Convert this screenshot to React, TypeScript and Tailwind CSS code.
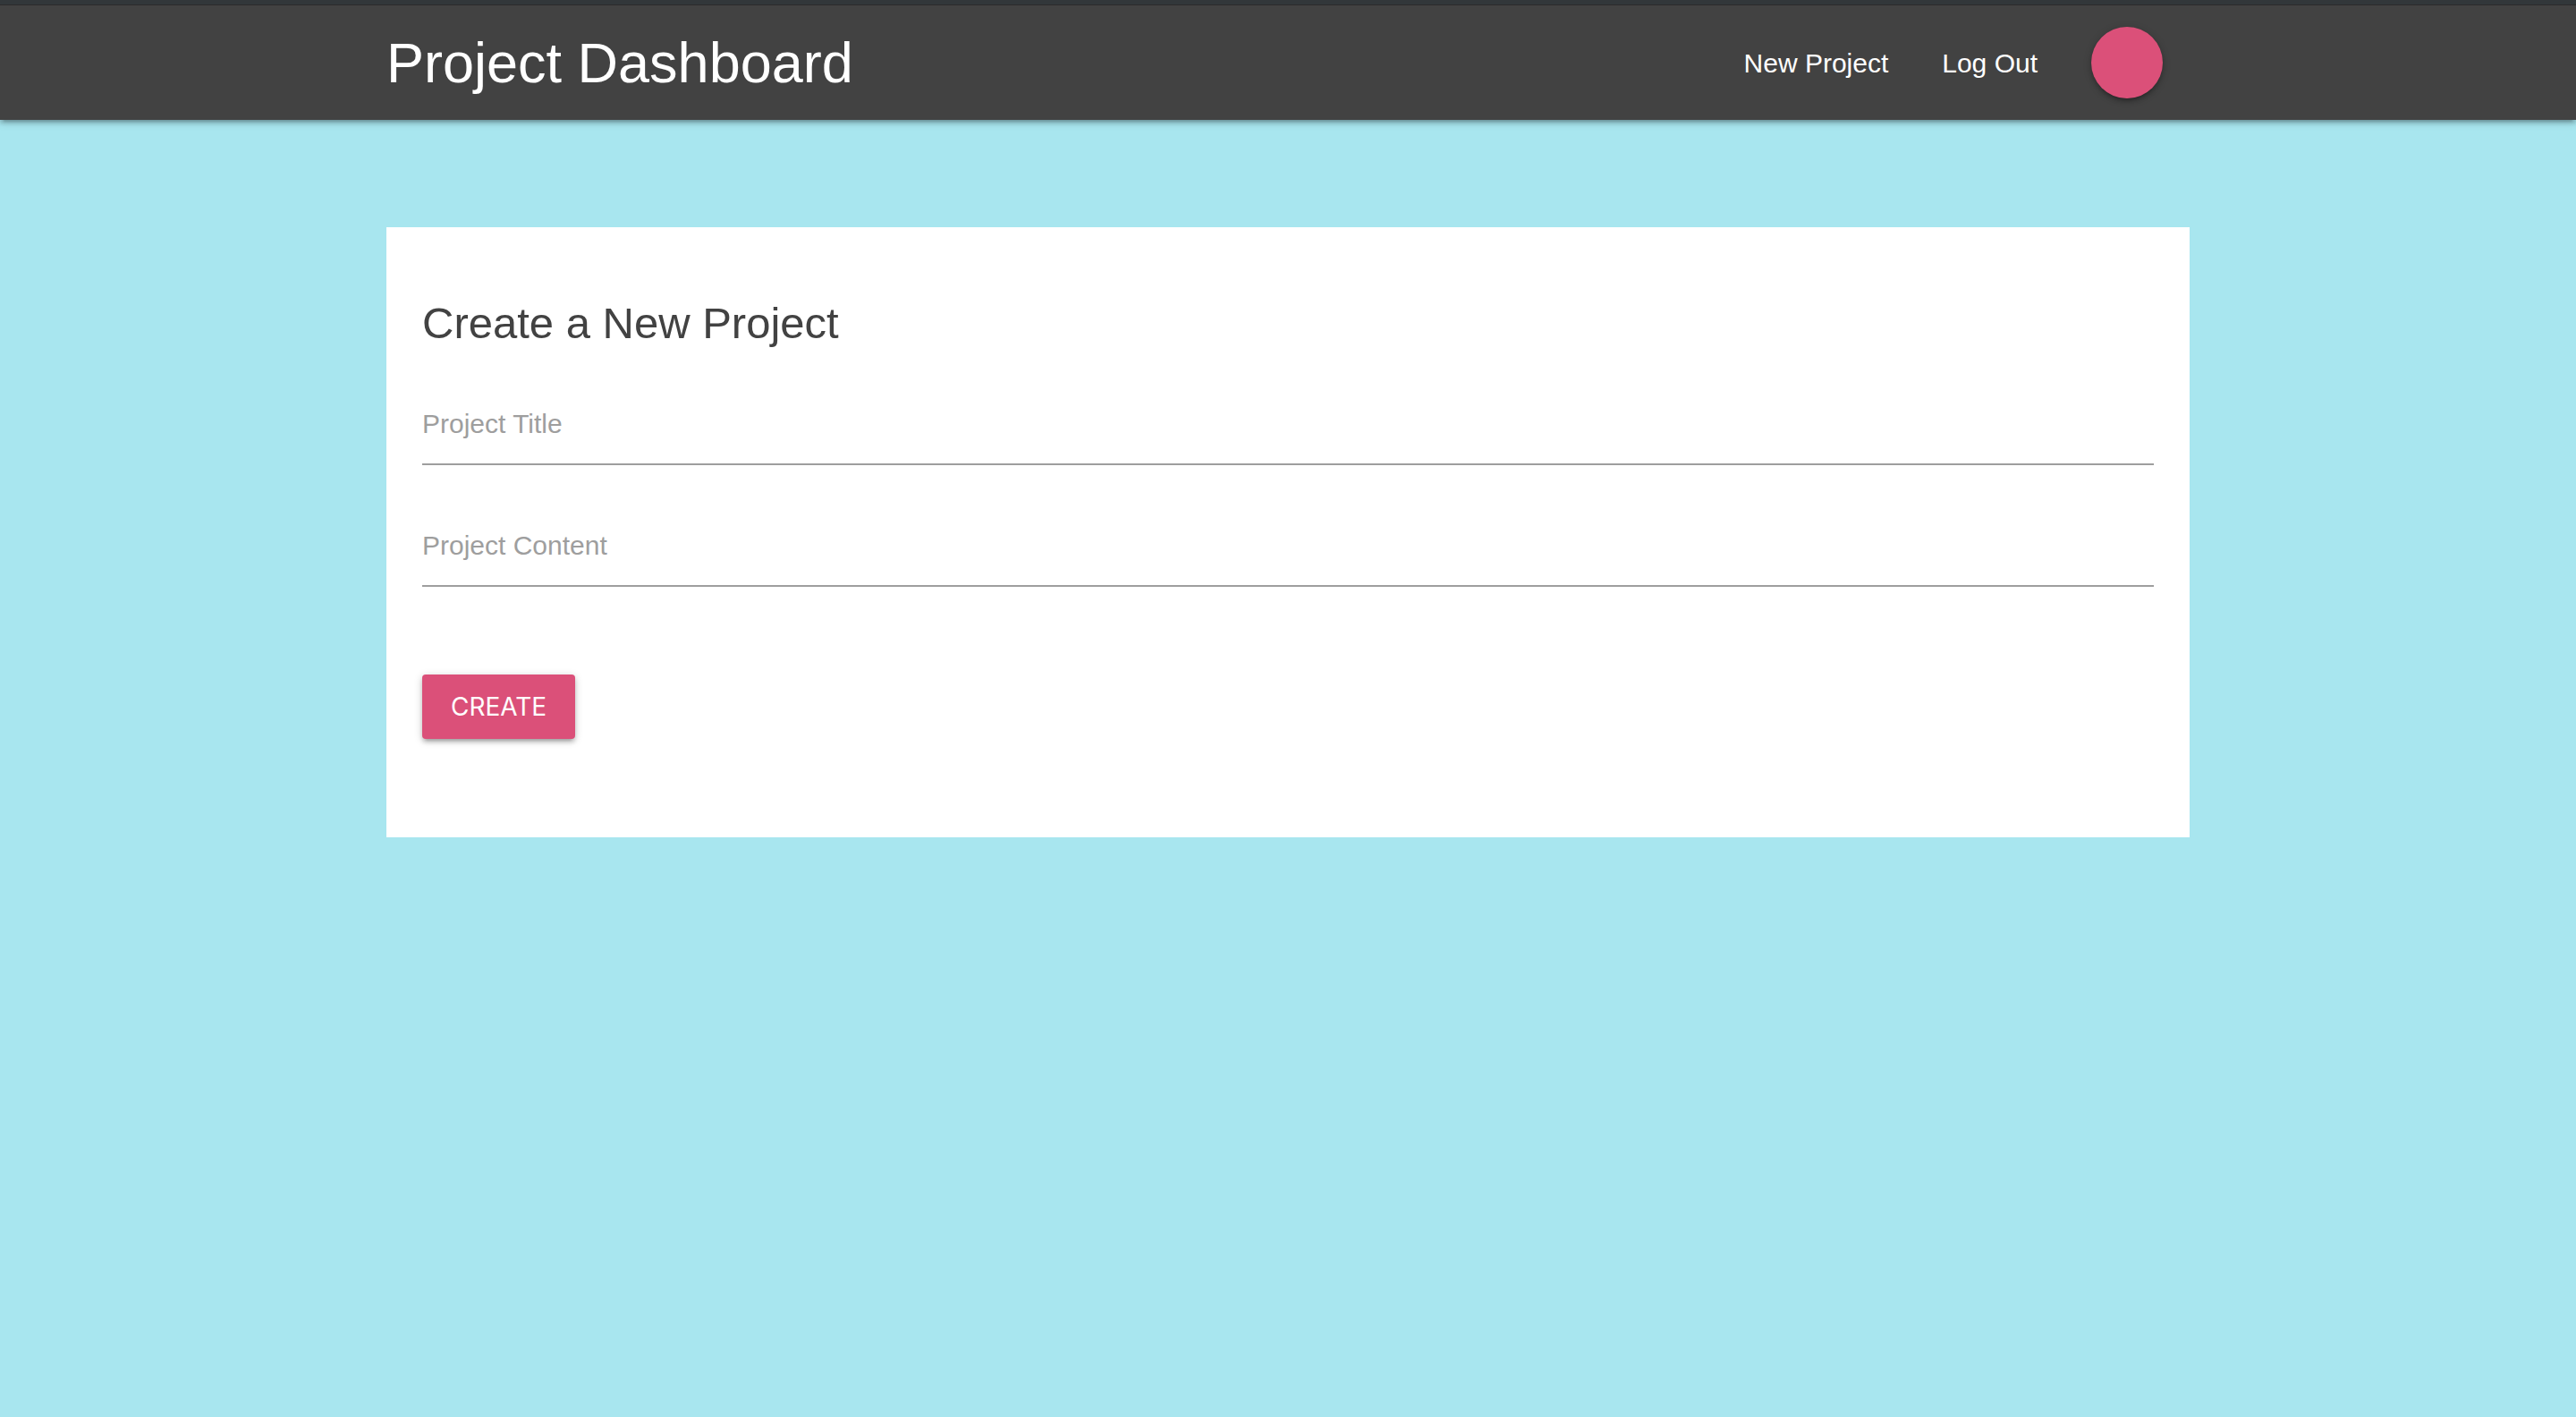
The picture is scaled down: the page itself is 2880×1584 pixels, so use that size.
import React from "react";

const raised =
  "shadow-[0_4px_4px_0_rgba(0,0,0,0.14),0_6px_2px_-4px_rgba(0,0,0,0.12),0_2px_10px_0_rgba(0,0,0,0.2)]";

function Navbar() {
  return (
    <header className={`border-t-5 border-[#32373a] bg-[#424242] ${raised}`}>
      <nav className="border-t border-[#2b2b2b]">
        <div className="mx-auto flex h-32 w-[70%] items-center justify-between text-white">
          <a href="#home" className="text-[63px] leading-none">
            Project Dashboard
          </a>
          <ul className="flex items-center text-[30px]">
            <li>
              <a href="#create" className="block px-[30px]">
                New Project
              </a>
            </li>
            <li>
              <a href="#logout" className="block px-[30px]">
                Log Out
              </a>
            </li>
            <li className="px-[30px]">
              <a
                href="#profile"
                aria-label="Profile"
                className="block size-20 rounded-full bg-[#db5079] shadow-[0_4px_4px_0_rgba(0,0,0,0.14),0_6px_2px_-4px_rgba(0,0,0,0.12),0_2px_10px_0_rgba(0,0,0,0.2)]"
              />
            </li>
          </ul>
        </div>
      </nav>
    </header>
  );
}

const control =
  "col-start-1 row-start-1 h-[92px] w-full resize-none border-b-2 border-[#9e9e9e] bg-transparent text-[30px] outline-none";
const caption =
  "col-start-1 row-start-1 self-center text-[30px] leading-9 text-[#9e9e9e] cursor-text";

function CreateProject() {
  return (
    <main className="mx-auto mt-30 w-[70%]">
      <form className="bg-white px-10 pt-20 pb-[110px]" onSubmit={(e) => e.preventDefault()}>
        <h1 className="text-[49px] leading-[54px] text-[#424242]">Create a New Project</h1>
        <div className="mt-10 grid">
          <input id="title" type="text" className={control} />
          <label htmlFor="title" className={caption}>
            Project Title
          </label>
        </div>
        <div className="mt-11 grid">
          <textarea id="content" className={control} />
          <label htmlFor="content" className={caption}>
            Project Content
          </label>
        </div>
        <button
          type="submit"
          className={`mt-[98px] block h-18 rounded-sm bg-[#db5079] px-8 font-[Inter,sans-serif] text-[28px] text-white uppercase ${raised}`}
        >
          Create
        </button>
      </form>
    </main>
  );
}

export default function App() {
  return (
    <div className="min-h-screen bg-[#a8e6ef] font-['Liberation_Sans',Arial,sans-serif]">
      <Navbar />
      <CreateProject />
    </div>
  );
}
